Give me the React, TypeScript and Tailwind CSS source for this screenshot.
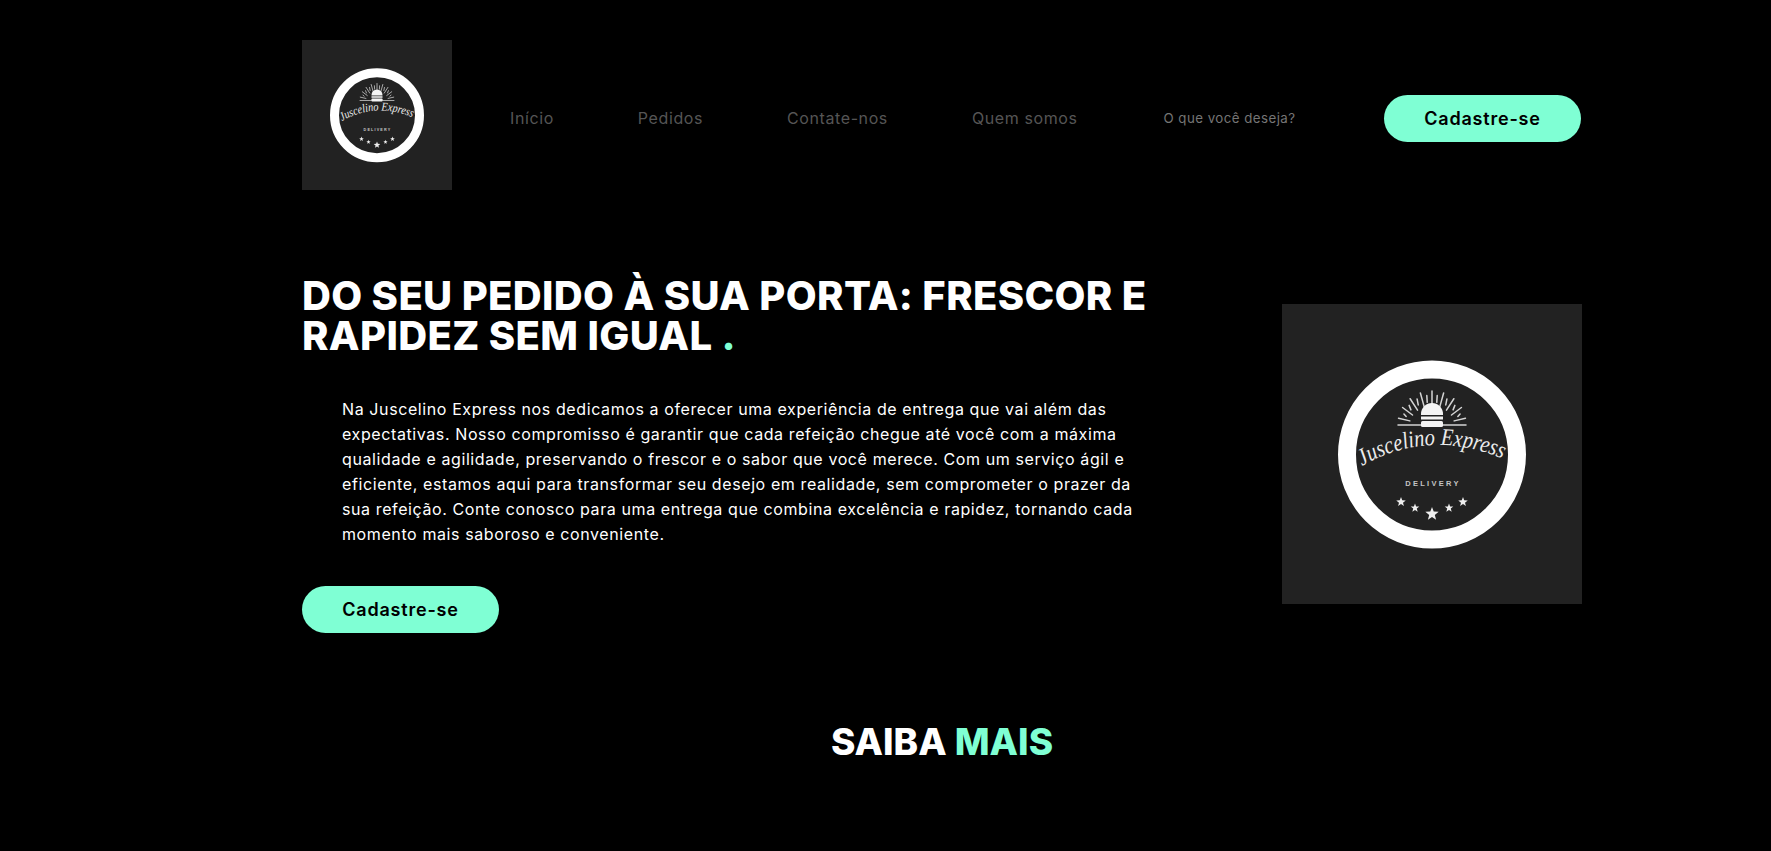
const rayAngles = [-80, -70, -60, -50, -40, -30, -20, -10, 0, 10, 20, 30, 40, 50, 60, 70, 80];

const starPoints = (cx: number, cy: number, r: number) =>
  Array.from({ length: 10 }, (_, i) => {
    const a = (Math.PI / 5) * i - Math.PI / 2;
    const d = i % 2 === 0 ? r : r * 0.42;
    return `${cx + d * Math.cos(a)},${cy + d * Math.sin(a)}`;
  }).join(' ');

const Logo = ({ size }: { size: number }) => (
  <div className="bg-[#222222] flex items-center justify-center shrink-0" style={{ width: size, height: size }}>
    <svg viewBox="0 0 300 300" width={size} height={size}>
      <circle cx="150" cy="150.500" r="85" fill="none" stroke="#fff" strokeWidth="18" />
      {/* rays */}
      <g stroke="#d4d4d4" strokeWidth="1.500" strokeLinecap="round">
        {rayAngles.map((deg, i) => {
          const a = (deg * Math.PI) / 180;
          const inner = i % 2 === 0 ? 18 : 22;
          const outer = i % 2 === 0 ? 33 : 29;
          return (
            <line
              key={deg}
              x1={150 + inner * 1.25 * Math.sin(a)}
              y1={120 - inner * Math.cos(a)}
              x2={150 + outer * 1.030 * Math.sin(a)}
              y2={120 - outer * Math.cos(a)}
            />
          );
        })}
        <path d="M116 121h26M158 121h26" />
      </g>
      {/* burger */}
      <path d="M139 110a11 11 0 0 1 22 0v1h-22z" fill="#f4f4f4" />
      <rect x="139" y="112.500" width="22" height="3" fill="#f4f4f4" />
      <rect x="139" y="117" width="22" height="6" rx="1.500" fill="#f4f4f4" />
      <defs>
        <path id={`arc-${size}`} d="M80 162Q150 122 228 158" />
      </defs>
      <text fill="#ececec" fontFamily="'Liberation Serif', serif" fontStyle="italic" fontSize="24">
        <textPath href={`#arc-${size}`} textLength="146" lengthAdjust="spacingAndGlyphs">Juscelino Express</textPath>
      </text>
      <text x="151" y="182" textAnchor="middle" fill="#c4c4c4" fontFamily="'Liberation Sans', sans-serif" fontSize="7.500" fontWeight="700" letterSpacing="2.300">
        DELIVERY
      </text>
      <g fill="#eeeeee">
        <polygon points={starPoints(119, 198, 5)} />
        <polygon points={starPoints(133, 204, 4.500)} />
        <polygon points={starPoints(150, 210, 7)} />
        <polygon points={starPoints(167, 204, 4.500)} />
        <polygon points={starPoints(181, 198, 5)} />
      </g>
    </svg>
  </div>
);

const CadastreButton = () => (
  <button className="w-[197px] h-[47px] rounded-[25px] bg-[#7fffd4] text-black text-[18px] font-semibold tracking-[0.8px]">
    Cadastre-se
  </button>
);

const navItems = ['Início', 'Pedidos', 'Contate-nos', 'Quem somos'];

export default function App() {
  return (
    <div className="h-[851px] bg-black text-white font-['Inter','Liberation_Sans',sans-serif] overflow-hidden">
      <div className="w-[1280px] ml-[302px] pt-[40px]">
        {/* Header */}
        <header className="flex items-start">
          <Logo size={150} />
          <nav className="flex items-center h-[45px] mt-[55px] ml-[58px] gap-[84px] text-[16px] text-[#555555] font-normal tracking-[0.6px]">
            {navItems.map((item) => (
              <a key={item} className="whitespace-nowrap">{item}</a>
            ))}
          </nav>
          <div className="flex items-center h-[47px] mt-[55px] ml-[86px] text-[13.300px] tracking-[0.45px] text-[#757575]">O que você deseja?</div>
          <div className="ml-auto mt-[55px] pr-[1px]">
            <CadastreButton />
          </div>
        </header>

        {/* Hero */}
        <section className="flex justify-between mt-[86px]">
          <div className="w-[860px]">
            <h1 className="text-[40px] leading-[40px] font-extrabold tracking-[0.35px]">
              DO SEU PEDIDO À SUA PORTA: FRESCOR E RAPIDEZ SEM IGUAL <span className="text-[#7fffd4]">.</span>
            </h1>
            <p className="mt-[41px] pl-[40px] w-[840px] text-[16px] leading-[25px] font-normal tracking-[0.6px]">
              Na Juscelino Express nos dedicamos a oferecer uma experiência de entrega que vai além das expectativas. Nosso compromisso é garantir que cada refeição chegue até você com a máxima qualidade e agilidade, preservando o frescor e o sabor que você merece. Com um serviço ágil e eficiente, estamos aqui para transformar seu desejo em realidade, sem comprometer o prazer da sua refeição. Conte conosco para uma entrega que combina excelência e rapidez, tornando cada momento mais saboroso e conveniente.
            </p>
            <div className="mt-[39px]">
              <CadastreButton />
            </div>
          </div>
          <div className="mt-[28px]">
            <Logo size={300} />
          </div>
        </section>

        {/* Saiba mais */}
        <h2 className="mt-[85px] text-center text-[37px] leading-[48px] font-extrabold">
          SAIBA <span className="text-[#7fffd4]">MAIS</span>
        </h2>
      </div>
    </div>
  );
}
